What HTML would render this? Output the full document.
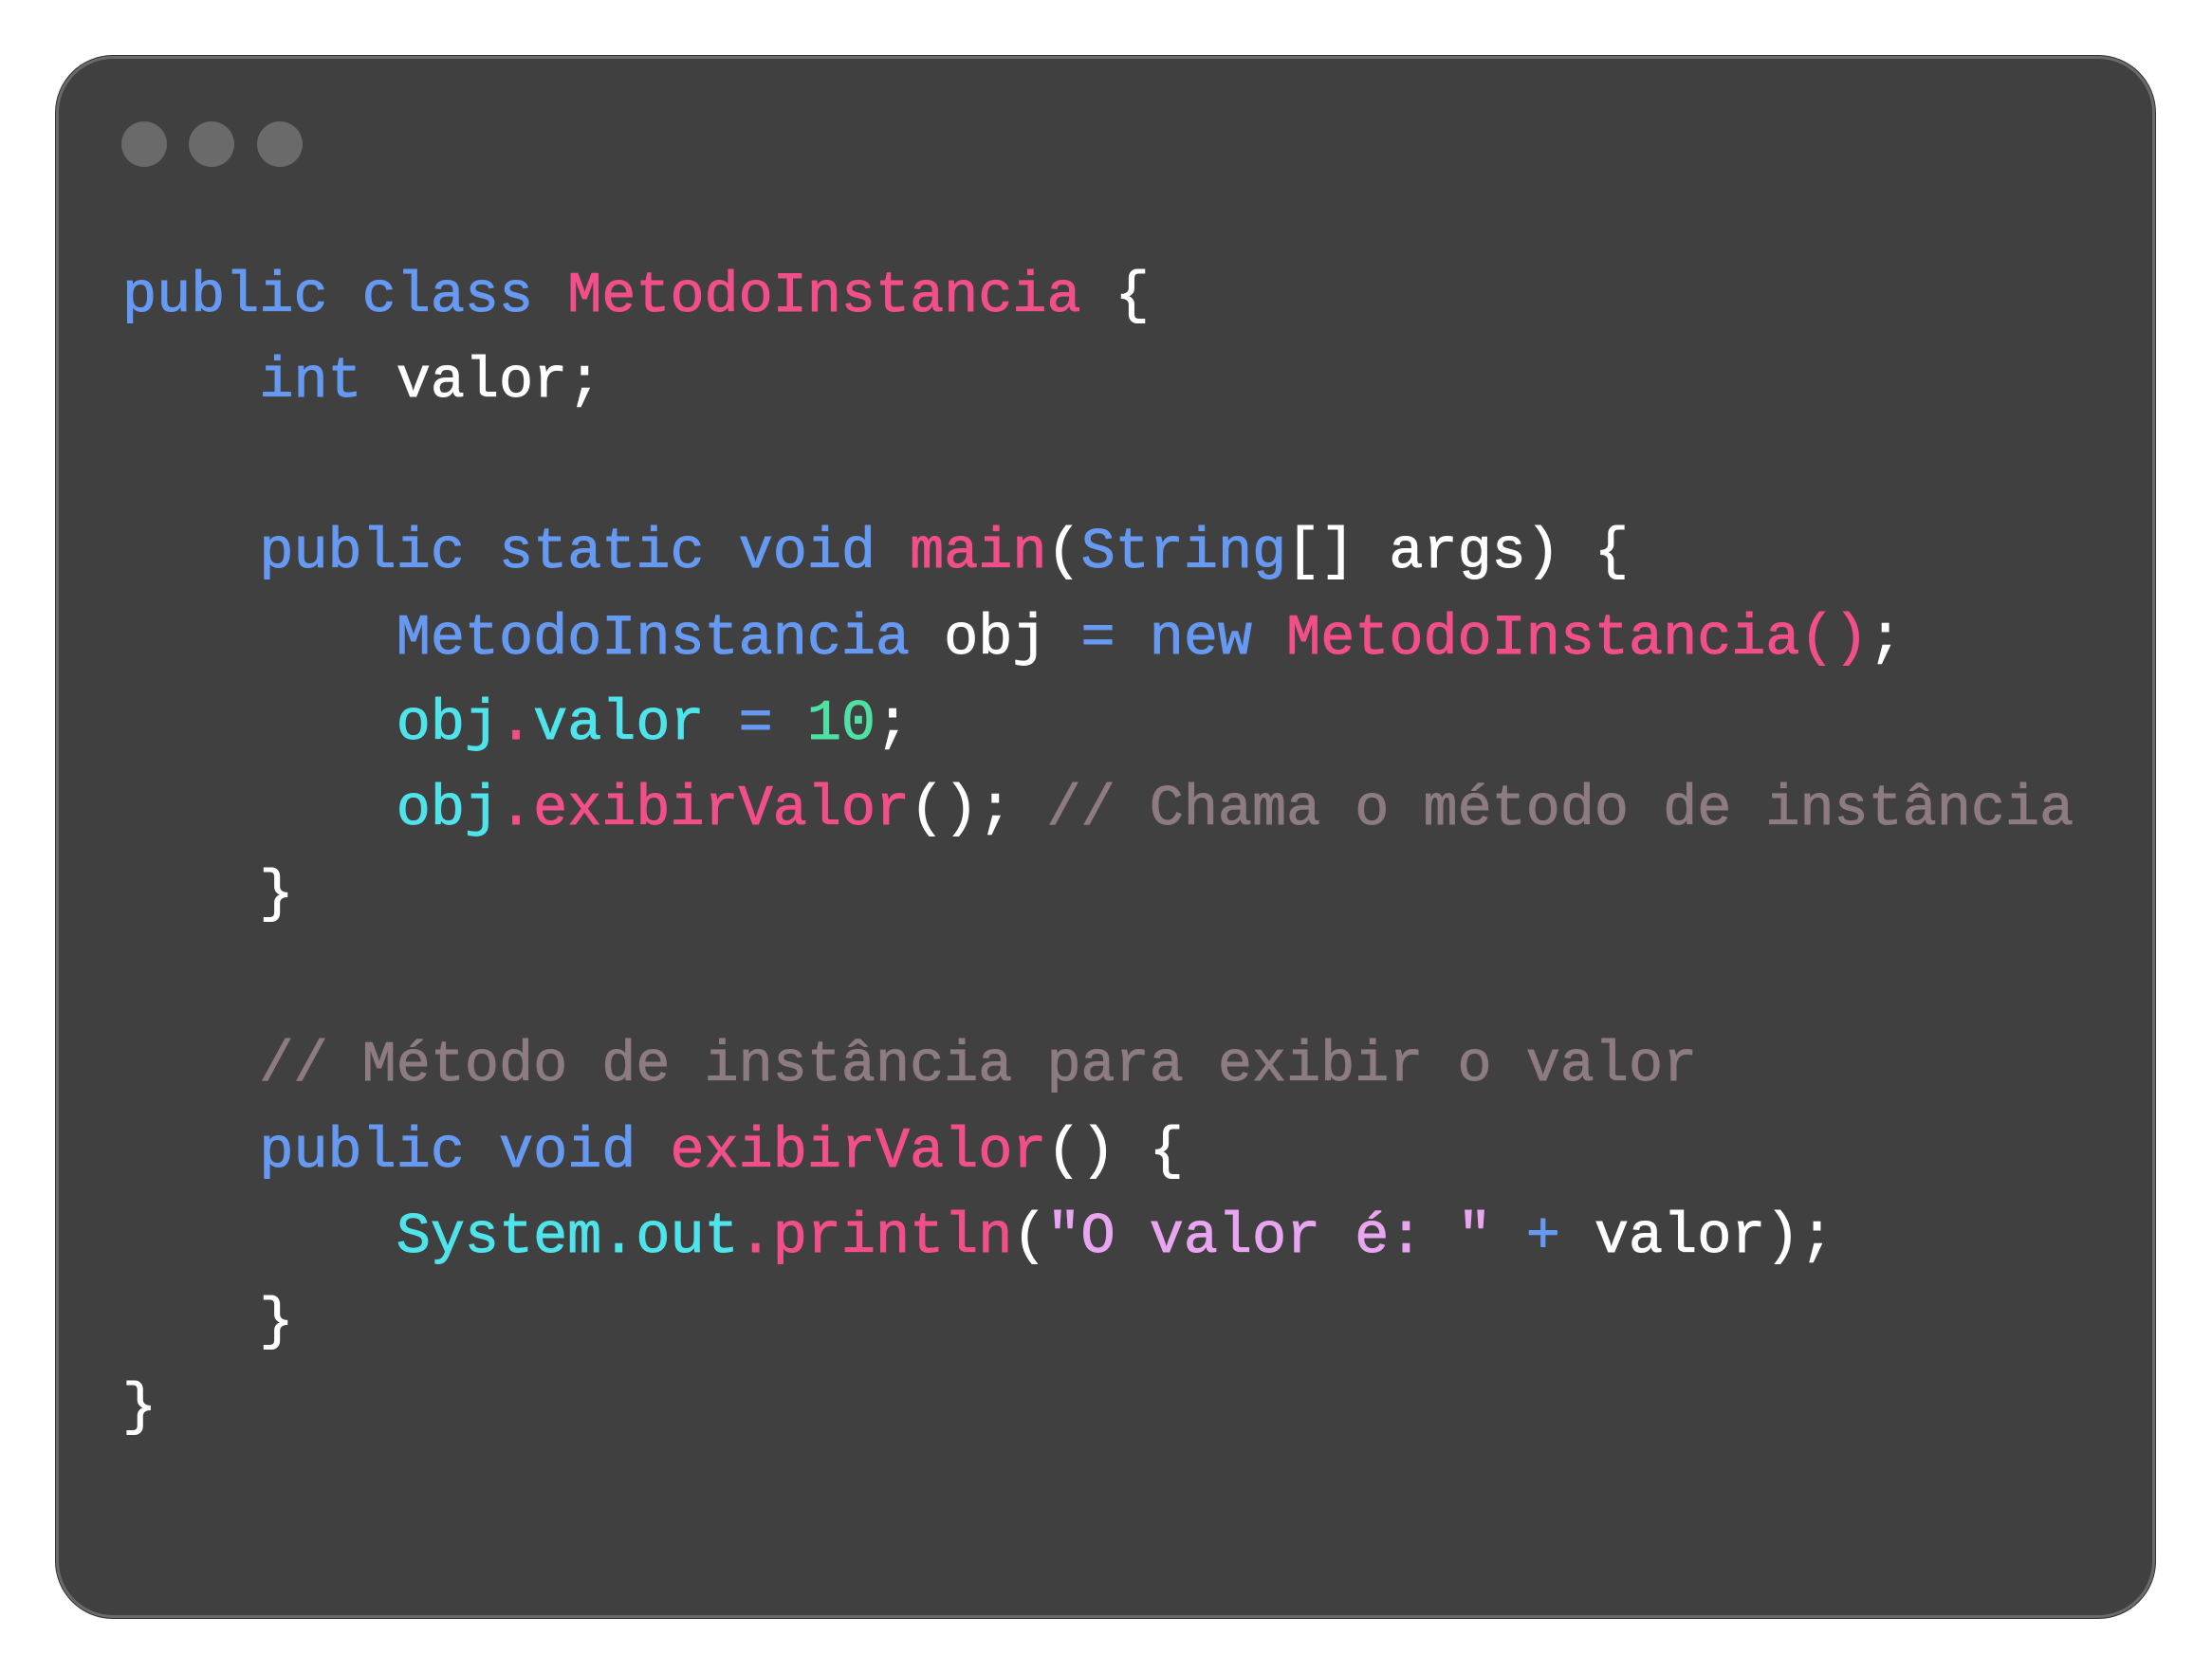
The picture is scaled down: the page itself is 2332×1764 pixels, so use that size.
<!DOCTYPE html>
<html><head><meta charset="utf-8"><style>
html,body{margin:0;padding:0;background:#fff;width:2332px;height:1764px;overflow:hidden}
.win{position:absolute;left:59px;top:59px;width:2207px;height:1641px;background:#404040;border:3px solid #6a6a6a;border-radius:60px;box-shadow:0 0 0 1px #333}
.dot{position:absolute;top:128px;width:48px;height:48px;border-radius:50%;background:#6a6a6a}
pre{position:absolute;left:129px;top:268px;margin:0;font-family:"Liberation Mono",monospace;font-size:60.15px;line-height:90.15px;color:#fff;-webkit-text-stroke:0.9px currentColor}
.k{color:#6699f2}.p{color:#f24f8a}.c{color:#8c7b80}.y{color:#4fe3ea}.g{color:#4fe0a4}.s{color:#e8a6f0}
</style></head><body>
<div class="win"></div>
<div class="dot" style="left:128px"></div>
<div class="dot" style="left:199px"></div>
<div class="dot" style="left:271px"></div>
<pre><span class="k">public</span> <span class="k">class</span> <span class="p">MetodoInstancia</span> {
    <span class="k">int</span> valor;

    <span class="k">public</span> <span class="k">static</span> <span class="k">void</span> <span class="p">main</span>(<span class="k">String</span>[] args) {
        <span class="k">MetodoInstancia</span> obj <span class="k">=</span> <span class="k">new</span> <span class="p">MetodoInstancia()</span>;
        <span class="y">obj</span><span class="p">.</span><span class="y">valor</span> <span class="k">=</span> <span class="g">10</span>;
        <span class="y">obj</span><span class="p">.exibirValor</span>(); <span class="c">// Chama o método de instância</span>
    }

    <span class="c">// Método de instância para exibir o valor</span>
    <span class="k">public</span> <span class="k">void</span> <span class="p">exibirValor</span>() {
        <span class="y">System.out</span><span class="p">.println</span>(<span class="s">"O valor é: "</span> <span class="k">+</span> valor);
    }
}</pre>
</body></html>
